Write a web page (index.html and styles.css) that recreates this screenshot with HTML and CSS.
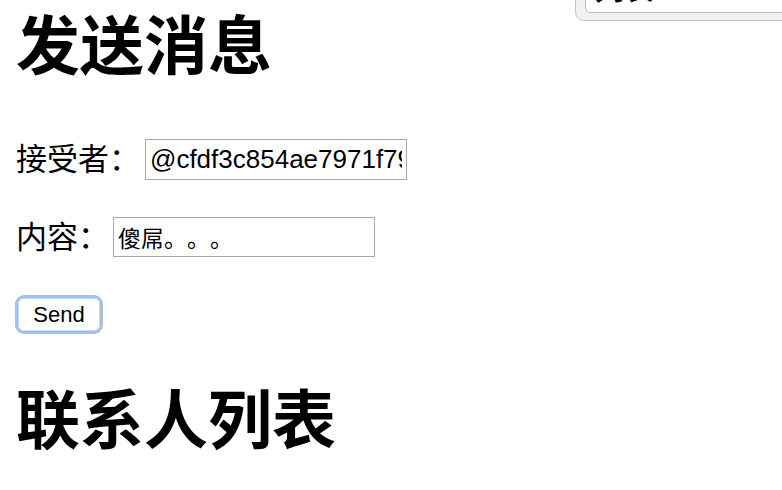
FILE: index.html
```html
<!DOCTYPE html>
<html lang="zh-CN">
<head>
<meta charset="utf-8">
<title>发送消息</title>
<link rel="stylesheet" href="styles.css">
</head>
<body>
<div class="popup"><div class="popup-inner">列表</div></div>
<h1 class="title">发送消息</h1>
<div class="row row-to"><span class="label">接受者：</span><input class="field" type="text" value="@cfdf3c854ae7971f79"></div>
<div class="row row-msg"><span class="label">内容：</span><input class="field field-cjk" type="text" value="傻屌。。。"></div>
<div class="row row-btn"><button class="send" type="button">Send</button></div>
<h1 class="title title-2">联系人列表</h1>
</body>
</html>
```
FILE: styles.css
```css
html, body {
  margin: 0;
  padding: 0;
  background: #ffffff;
  overflow: hidden;
}
body {
  padding: 0 16px;
  font-family: "Liberation Sans", "Noto Sans CJK SC", sans-serif;
  color: #000;
  height: 490px;
  position: relative;
  text-spacing-trim: space-all;
}
.title {
  font-size: 64px;
  font-weight: bold;
  line-height: 76px;
  margin: 9px 0 0;
}
.title-2 {
  margin-top: 51px;
}
.row {
  display: flex;
  align-items: center;
  height: 41px;
}
.row-to { margin-top: 54px; }
.row-msg { margin-top: 37px; height: 40px; }
.row-btn { margin-top: 40px; height: 35px; }
.label {
  font-size: 31px;
  line-height: 41px;
}
.row-to .label { width: 129px; }
.row-msg .label { width: 97px; }
.field {
  box-sizing: border-box;
  width: 262px;
  height: 41px;
  margin: 0;
  padding: 2px 4px;
  border: 1px solid #a9a9a9;
  border-radius: 0;
  font-family: "Liberation Sans", "Noto Sans CJK SC", sans-serif;
  font-size: 26px;
  color: #000;
  background: #fff;
  outline: none;
  text-spacing-trim: space-all;
}
.field-cjk {
  font-family: "Noto Sans CJK SC", sans-serif;
  font-size: 23px;
  font-feature-settings: "palt" 0, "halt" 0;
}
.row-msg .field { height: 40px; }
.send {
  box-sizing: border-box;
  margin: 0 0 0 1px;
  width: 84px;
  height: 35px;
  padding: 0;
  border: 1px solid #b8b8b8;
  border-radius: 7px;
  background: #fff;
  box-shadow: 0 0 0 2px #9fc3ee, inset 0 0 0 1px #c9dcf5;
  font-family: "Liberation Sans", sans-serif;
  font-size: 22px;
  color: #000;
}
.popup {
  position: absolute;
  top: -40px;
  left: 575px;
  width: 230px;
  height: 61px;
  box-sizing: border-box;
  background: #f1f1f1;
  border: 1px solid #c6c6c6;
  border-radius: 9px;
  padding: 10px 0 0 9px;
}
.popup-inner {
  box-sizing: border-box;
  height: 42px;
  background: #fff;
  border: 1px solid #bdbdbd;
  border-radius: 5px;
  font-size: 30px;
  font-weight: bold;
  line-height: 34px;
  padding-left: 8px;
  color: #000;
}
```
